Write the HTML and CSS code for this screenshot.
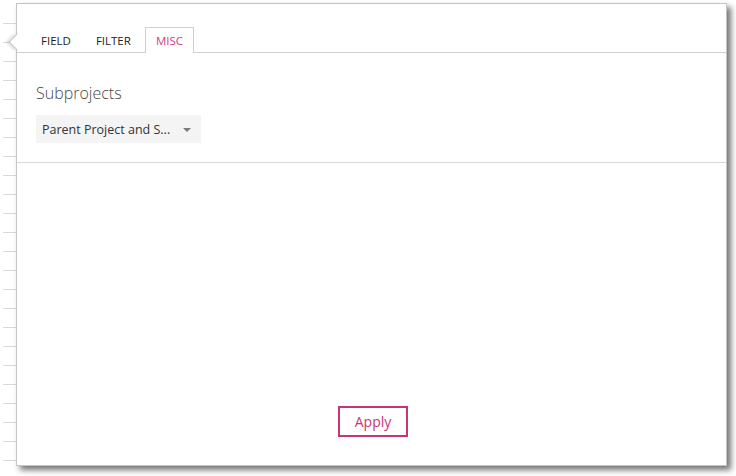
FILE: index.html
```html
<!DOCTYPE html>
<html>
<head>
<meta charset="utf-8">
<link rel="stylesheet" href="styles.css">
</head>
<body>
<div class="page">
  <div class="gutter"></div>
  <div class="panel">
    <div class="notch"></div>
    <div class="tabs">
      <div class="tab">FIELD</div>
      <div class="tab">FILTER</div>
      <div class="tab active">MISC</div>
    </div>
    <div class="section">
      <div class="heading">Subprojects</div>
      <div class="select">
        <span class="select-text">Parent Project and S...</span>
        <span class="caret"></span>
      </div>
    </div>
    <div class="spacer"></div>
    <div class="footer">
      <button class="apply">Apply</button>
    </div>
  </div>
</div>
</body>
</html>
```
FILE: styles.css
```css
html, body {
  margin: 0;
  padding: 0;
  background: #ffffff;
  font-family: "Open Sans", "Noto Sans", sans-serif;
}
.page {
  display: flex;
  align-items: flex-start;
  padding-top: 3px;
  height: 476px;
  box-sizing: border-box;
}
.gutter {
  flex: 0 0 13px;
  width: 13px;
  margin-left: 3px;
  margin-top: 12px;
  height: 461px;
  background-image: repeating-linear-gradient(to bottom, transparent 0px, transparent 8px, #dadada 8px, #dadada 9px, transparent 9px, transparent 19px);
}
.panel {
  position: relative;
  width: 711px;
  height: 463px;
  box-sizing: border-box;
  border: 1px solid #c4c4c4;
  background: #fff;
  box-shadow: 4px 4px 6px rgba(0,0,0,0.55);
  display: flex;
  flex-direction: column;
}
.notch {
  position: absolute;
  left: -6px;
  top: 32px;
  width: 11px;
  height: 11px;
  background: #fff;
  border-left: 1px solid #c4c4c4;
  border-bottom: 1px solid #c4c4c4;
  transform: rotate(45deg);
  box-shadow: -2px 2px 3px rgba(0,0,0,0.12);
}
.tabs {
  display: flex;
  gap: 3px;
  margin-top: 23px;
  padding-left: 13px;
  border-bottom: 1px solid #d0d0d0;
  height: 25px;
}
.tab {
  padding: 0 10px;
  height: 25px;
  line-height: 26px;
  font-size: 11.5px;
  color: #222;
  border: 1px solid transparent;
  border-bottom: none;
  box-sizing: border-box;
}
.tab.active {
  color: #cf3a84;
  border-color: #d0d0d0;
  background: #fff;
  height: 26px;
}
.section {
  padding: 30px 0 19px 19px;
  border-bottom: 1px solid #d6d6d6;
}
.heading {
  font-size: 16px;
  font-weight: 300;
  color: #484848;
  line-height: 20px;
}
.select {
  margin-top: 12px;
  width: 165px;
  height: 28px;
  background: #f4f4f4;
  display: flex;
  align-items: center;
  padding: 0 10px 0 6px;
  box-sizing: border-box;
  justify-content: space-between;
}
.select-text {
  font-size: 12.5px;
  color: #333;
}
.caret {
  width: 0;
  height: 0;
  border-left: 4.5px solid transparent;
  border-right: 4.5px solid transparent;
  border-top: 4px solid #7a7a7a;
  margin-top: 2px;
}
.spacer {
  flex: 1;
}
.footer {
  display: flex;
  justify-content: center;
  padding-left: 3px;
  padding-bottom: 28px;
}
.apply {
  width: 70px;
  height: 31px;
  border: 2px solid #c83477;
  background: #fff;
  color: #c83477;
  font-family: "Open Sans", "Noto Sans", sans-serif;
  font-size: 14px;
  padding: 0;
}
```
